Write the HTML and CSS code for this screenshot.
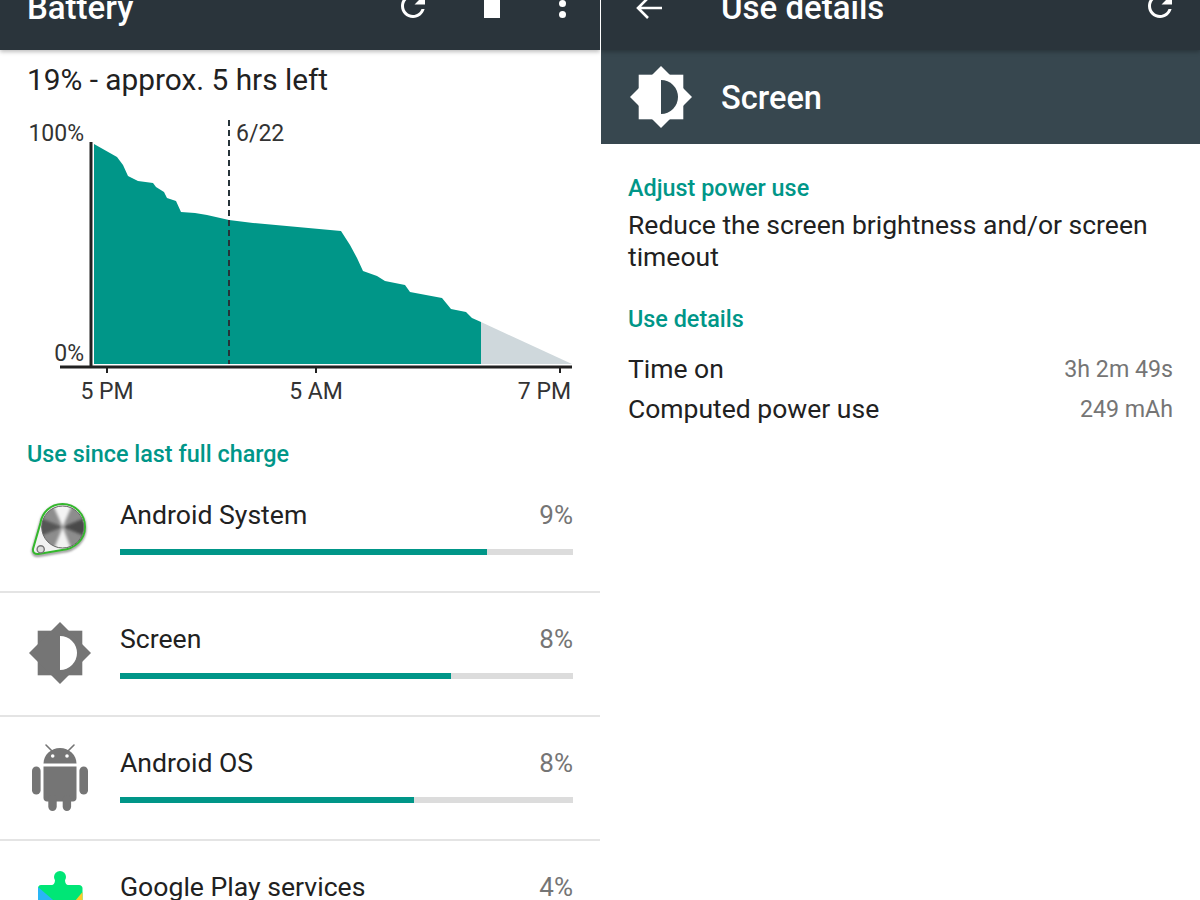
FILE: index.html
```html
<!DOCTYPE html>
<html lang="en">
<head>
    <meta charset="UTF-8">
    <meta name="viewport" content="width=device-width, initial-scale=1.0">
    <title>Battery</title>
    <link rel="stylesheet" href="styles.css">
</head>
<body>
    <div class="panes">
        <!-- battery list -->
        <div class="pane pane-left">
            <div class="toolbar">
                <h1 class="toolbar-title">Battery</h1>
                <svg class="tool-refresh" viewBox="0 0 24 24"><path d="M17.65 6.35C16.2 4.9 14.21 4 12 4c-4.42 0-7.99 3.58-7.99 8s3.57 8 7.99 8c3.73 0 6.84-2.55 7.73-6h-2.08c-.82 2.33-3.04 4-5.65 4-3.31 0-6-2.69-6-6s2.69-6 6-6c1.66 0 3.14.69 4.22 1.78L13 11h7V4l-2.35 2.35z"/></svg>
                <span class="tool-save"></span>
                <span class="tool-more"><i></i><i></i></span>
            </div>
            <p class="summary">19% - approx. 5 hrs left</p>

            <svg class="chart" viewBox="0 110 600 300">
                <polygon class="chart-left" points="481,322 572,364 481,364"/>
                <polygon class="chart-used" points="94,144 117,157 123,165 128,176 138,181 153,183 156,187 164,192 167,198 176,201 181,212 195,213 207,215 229,220 253,223 341,231 350,245 357,258 363,271 377,276 385,281 405,285 410,292 442,298 451,309 466,312 472,318 481,322 481,364 94,364"/>
                <line class="chart-marker" x1="229" y1="120" x2="229" y2="364"/>
                <line class="chart-axis" x1="91" y1="142" x2="91" y2="368"/>
                <line class="chart-axis" x1="60" y1="367" x2="572" y2="367"/>
                <line class="chart-tick" x1="107" y1="367" x2="107" y2="373"/>
                <line class="chart-tick" x1="316" y1="367" x2="316" y2="373"/>
                <line class="chart-tick" x1="560" y1="367" x2="560" y2="373"/>
                <text class="chart-label end" x="84" y="141">100%</text>
                <text class="chart-label end" x="84" y="361">0%</text>
                <text class="chart-label" x="236" y="141">6/22</text>
                <text class="chart-label middle" x="107" y="399">5 PM</text>
                <text class="chart-label middle" x="316" y="399">5 AM</text>
                <text class="chart-label end" x="571" y="399">7 PM</text>
            </svg>

            <h2 class="section-title usage-title">Use since last full charge</h2>

            <div class="usage-row">
                <svg class="usage-icon" viewBox="27 493 66 76">
                    <defs>
                        <filter id="soft"><feGaussianBlur stdDeviation="1.2"/></filter>
                        <filter id="softer"><feGaussianBlur stdDeviation="1.6"/></filter>
                        <clipPath id="disc"><circle cx="62.7" cy="527" r="21"/></clipPath>
                    </defs>
                    <path d="M62.5 504C50 504 42 513 40.5 523L33 549C32.5 552.5 35 554.5 38.5 554L62 550C75 549 85 539 85 527C85 514 75 504 62.5 504Z" fill="#fff" stroke="#999" stroke-width="3" filter="url(#soft)" transform="translate(0 1.5)"/>
                    <path d="M62.5 504C50 504 42 513 40.5 523L33 549C32.5 552.5 35 554.5 38.5 554L62 550C75 549 85 539 85 527C85 514 75 504 62.5 504Z" fill="#f2f2f2" stroke="#33b82c" stroke-width="2"/>
                    <g clip-path="url(#disc)">
                        <rect x="40" y="505" width="46" height="44" fill="#8d8d8d"/>
                        <g filter="url(#softer)">
                            <polygon points="62.7,527 52,503 73,503" fill="#f4f4f4"/>
                            <polygon points="62.7,527 53,551 72,551" fill="#f2f2f2"/>
                            <polygon points="62.7,527 38,517 38,537" fill="#555"/>
                            <polygon points="62.7,527 87,517 87,537" fill="#4a4a4a"/>
                        </g>
                    </g>
                    <circle cx="62.7" cy="527" r="21" fill="none" stroke="#666" stroke-width="1"/>
                    <circle cx="40.7" cy="549.3" r="3.6" fill="#ddd" stroke="#777" stroke-width="1.4"/>
                </svg>
                <div class="usage-info">
                    <div class="usage-line"><span class="usage-name">Android System</span><span class="usage-value">9%</span></div>
                    <div class="usage-track"><div class="usage-fill" style="width: 81%"></div></div>
                </div>
            </div>

            <div class="usage-row">
                <svg class="usage-icon" viewBox="27 617 66 76">
                    <rect x="37.7" y="630.7" width="44.6" height="44.6" fill="#757575"/>
                    <polygon points="60,622 91,653 60,684 29,653" fill="#757575"/>
                    <path d="M60 636A17 17 0 0 1 60 670Z" fill="#fff"/>
                </svg>
                <div class="usage-info">
                    <div class="usage-line"><span class="usage-name">Screen</span><span class="usage-value">8%</span></div>
                    <div class="usage-track"><div class="usage-fill" style="width: 73%"></div></div>
                </div>
            </div>

            <div class="usage-row">
                <svg class="usage-icon" viewBox="27 741 66 76">
                    <g fill="#757575">
                        <path d="M43.5 763.5C43.5 755 51 748 60 748C69 748 76.5 755 76.5 763.5Z"/>
                        <path d="M43.5 766.5H76.5V798C76.5 800 75 801.5 73 801.5H47C45 801.5 43.5 800 43.5 798Z"/>
                        <rect x="32" y="766.5" width="8.6" height="28" rx="4.3"/>
                        <rect x="79.4" y="766.5" width="8.6" height="28" rx="4.3"/>
                        <rect x="48.3" y="795" width="8.4" height="16" rx="4.2"/>
                        <rect x="62.7" y="795" width="8.4" height="16" rx="4.2"/>
                    </g>
                    <path d="M46 745L52 751M74 745L68 751" stroke="#757575" stroke-width="1.6" stroke-linecap="round"/>
                    <circle cx="52.7" cy="756" r="1.8" fill="#fff"/>
                    <circle cx="67" cy="756" r="1.8" fill="#fff"/>
                </svg>
                <div class="usage-info">
                    <div class="usage-line"><span class="usage-name">Android OS</span><span class="usage-value">8%</span></div>
                    <div class="usage-track"><div class="usage-fill" style="width: 65%"></div></div>
                </div>
            </div>

            <div class="usage-row">
                <svg class="usage-icon" viewBox="27 865 66 76">
                    <circle cx="60" cy="877" r="6" fill="#00e676"/>
                    <path d="M55 879H65C65 883 66 885 69 885H79C81 885 82.5 886.500 82.5 888V925H38V888C38 886.500 39 885 41 885H51C54 885 55 883 55 879Z" fill="#00e676"/>
                    <path d="M38 887V925H82Z" fill="#29b6f6"/>
                    <path d="M82.500 892V925H55Z" fill="#ffca28"/>
                </svg>
                <div class="usage-info">
                    <div class="usage-line"><span class="usage-name">Google Play services</span><span class="usage-value">4%</span></div>
                </div>
            </div>
        </div>

        <!-- use details -->
        <div class="pane pane-right">
            <div class="toolbar">
                <svg class="tool-back" viewBox="0 0 28 24"><path d="M13 2L3 12L13 22M3 12H27"/></svg>
                <h1 class="toolbar-title details-title">Use details</h1>
                <svg class="tool-refresh" viewBox="0 0 24 24"><path d="M17.65 6.35C16.2 4.9 14.21 4 12 4c-4.42 0-7.99 3.58-7.99 8s3.57 8 7.99 8c3.73 0 6.84-2.55 7.73-6h-2.08c-.82 2.33-3.04 4-5.65 4-3.31 0-6-2.69-6-6s2.69-6 6-6c1.66 0 3.14.69 4.22 1.78L13 11h7V4l-2.35 2.35z"/></svg>
            </div>
            <div class="app-header">
                <svg class="app-icon" viewBox="0 0 66 66">
                    <rect x="10.7" y="10.7" width="44.6" height="44.6" fill="#fff"/>
                    <polygon points="33,2 64,33 33,64 2,33" fill="#fff"/>
                    <path d="M33 16A17 17 0 0 1 33 50Z" fill="#37474f"/>
                </svg>
                <span class="app-name">Screen</span>
            </div>
            <div class="details">
                <h2 class="section-title">Adjust power use</h2>
                <p class="details-text">Reduce the screen brightness and/or screen timeout</p>
                <h2 class="section-title details-second">Use details</h2>
                <div class="detail-rows">
                    <div class="detail-row"><span>Time on</span><span class="detail-value">3h 2m 49s</span></div>
                    <div class="detail-row"><span>Computed power use</span><span class="detail-value">249 mAh</span></div>
                </div>
            </div>
        </div>
    </div>
</body>
</html>
```

FILE: styles.css
```css
html, body { margin: 0; padding: 0; height: 100%; overflow: hidden; background: #fff; }
body { font-family: Roboto, "Liberation Sans", sans-serif; color: #212121; }
h1, h2, p { margin: 0; }

.panes { display: flex; gap: 1px; height: 900px; overflow: hidden; }
.pane { height: 900px; overflow: hidden; }
.pane-left { width: 600px; flex: none; }
.pane-right { flex: 1; }

/* toolbar is cut by the top of the screenshot */
.toolbar { position: relative; z-index: 1; display: flex; align-items: flex-end; height: 23px; padding: 0 0 27px 27px; background: #2a343b; box-shadow: 0 2px 4px rgba(0,0,0,0.25); color: #fff; }
.toolbar-title { font-size: 33px; font-weight: 500; line-height: 36px; margin-bottom: -3px; white-space: nowrap; }
.tool-refresh { flex: none; width: 36px; height: 36px; margin-left: auto; fill: #fff; margin-bottom: -1px; }
.tool-save { flex: none; width: 16px; height: 30px; margin: 0 59px 5px 0; background: #fff; }
.tool-more { flex: none; display: flex; flex-direction: column; gap: 4px; width: 7px; margin: 0 34px 5px 0; }
.tool-more i { display: block; width: 7px; height: 7px; border-radius: 50%; background: #fff; }
.pane-left .tool-refresh { margin-right: 53px; }
.pane-right .toolbar { padding-left: 34px; }
.pane-right .tool-refresh { margin-right: 22px; }
.tool-back { flex: none; width: 28px; height: 24px; margin-bottom: 3px; fill: none; stroke: #fff; stroke-width: 2.6; }
.details-title { margin-left: 58px; }

.summary { font-size: 29.8px; line-height: 36px; margin: 12px 0 12px 27px; }

.chart { display: block; width: 600px; height: 300px; }
.chart-used { fill: #009688; }
.chart-left { fill: #cfd8dc; }
.chart-marker { stroke: #263238; stroke-width: 2; stroke-dasharray: 6 4; }
.chart-axis { stroke: #212121; stroke-width: 3; }
.chart-tick { stroke: #212121; stroke-width: 2; }
.chart-label { font-size: 23px; fill: #333; }
.chart-label.end { text-anchor: end; }
.chart-label.middle { text-anchor: middle; }

.section-title { font-size: 23.4px; font-weight: 500; line-height: 30px; color: #009688; }
.usage-title { margin: 29px 0 0 27px; }

.usage-row { display: flex; box-sizing: border-box; height: 124px; padding: 24px 27px 0; border-bottom: 2px solid #e4e4e4; }
.usage-icon { flex: none; width: 66px; height: 76px; margin-right: 27px; }
.usage-info { flex: 1; padding-top: 4px; }
.usage-line { display: flex; justify-content: space-between; line-height: 36px; }
.usage-name { font-size: 26.6px; }
.usage-value { font-size: 26px; color: #757575; }
.usage-track { height: 6px; margin-top: 16px; background: #dcdcdc; }
.usage-fill { height: 100%; background: #009688; }

.app-header { display: flex; align-items: center; height: 94px; padding-left: 27px; background: #37474f; }
.app-icon { flex: none; width: 66px; height: 66px; margin-right: 27px; }
.app-name { font-size: 32.6px; font-weight: 500; color: #fff; padding-top: 2px; }

.details { padding: 29px 27px 0; }
.details-text { margin-top: 6px; font-size: 26.5px; line-height: 32px; }
.details-second { margin-top: 31px; }
.detail-rows { margin-top: 14px; }
.detail-row { display: flex; justify-content: space-between; align-items: center; height: 40px; font-size: 26.5px; }
.detail-value { font-size: 23.2px; color: #757575; padding-top: 1px; }
```
